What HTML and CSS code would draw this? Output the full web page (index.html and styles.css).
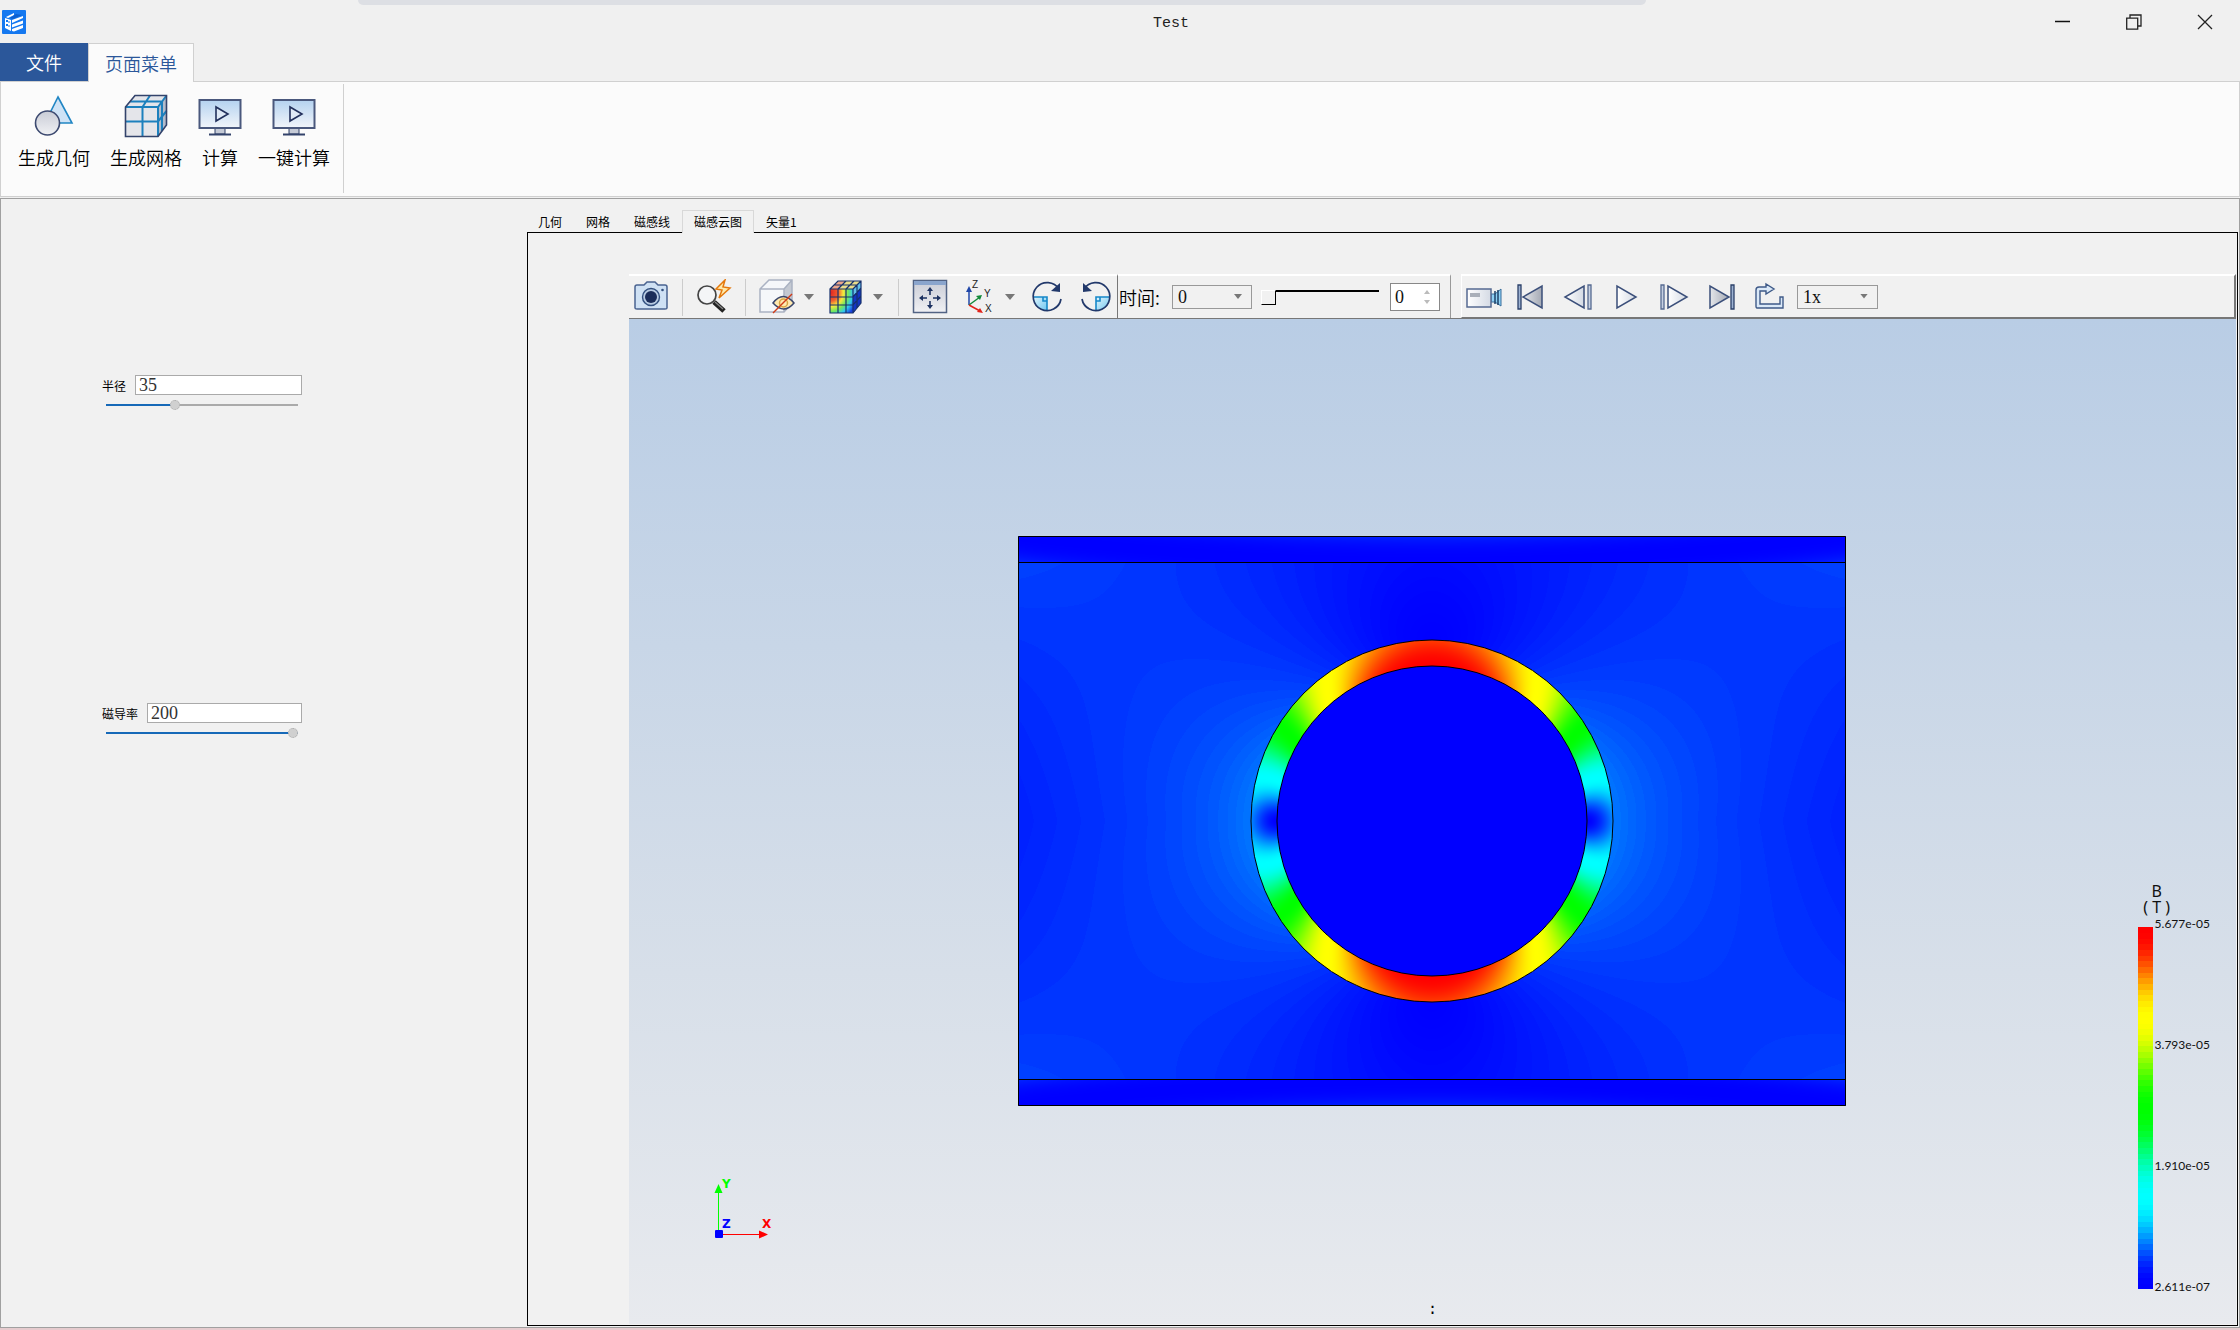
FILE: index.html
```html
<!DOCTYPE html>
<html lang="zh-CN">
<head>
<meta charset="utf-8">
<title>Test</title>
<link rel="stylesheet" href="styles.css">
</head>
<body>
<svg class="defs" aria-hidden="true">
  <defs>
    <linearGradient id="metal" x1="0" y1="0" x2="0" y2="1"><stop offset="0" stop-color="#c9ccd6"/><stop offset="1" stop-color="#f0f1f4"/></linearGradient>
    <linearGradient id="screen" x1="0" y1="0" x2="0" y2="1"><stop offset="0" stop-color="#b4d2f0"/><stop offset="1" stop-color="#f2f5fa"/></linearGradient>
    <linearGradient id="aqua" x1="0" y1="0" x2="1" y2="1"><stop offset="0" stop-color="#e2f5fd"/><stop offset="1" stop-color="#6cc6f0"/></linearGradient>
    <radialGradient id="rainbow" cx="0" cy=".15" r="1.2"><stop offset="0" stop-color="#e02020"/><stop offset=".3" stop-color="#f06030"/><stop offset=".48" stop-color="#f8e83c"/><stop offset=".66" stop-color="#70e860"/><stop offset=".82" stop-color="#30c8f0"/><stop offset="1" stop-color="#1840e0"/></radialGradient>
    <linearGradient id="shade" x1="0" y1="0" x2="1" y2="0"><stop offset="0" stop-color="#e4e6ea"/><stop offset="1" stop-color="#a4a9b4"/></linearGradient>
    <linearGradient id="pale" x1="0" y1="0" x2="1" y2="0"><stop offset="0" stop-color="#ffffff"/><stop offset="1" stop-color="#d4dae4"/></linearGradient>
  </defs>
</svg>

<header class="titlebar">
  <div class="backdrop"></div>
  <svg class="logo" viewBox="0 0 24 24"><rect width="24" height="24" rx="1" fill="#1478f0"/><path d="M4 7l8-4v2L6 8zM3 8l6 2v11l-6-3z" fill="#fff"/><path d="M5 10v2M5 14v2" stroke="#1478f0" stroke-width="2"/><path d="M7 11v2M7 15v2" stroke="#1478f0" stroke-width="1"/><path d="M10 10l11-4v2L10 13zM10 14.500l11-4v3l-11 4zM10 19l11-4v3l-9 3.500-2-.5z" fill="#fff"/><path d="M8 8l6-4 6 1-9 4z" fill="#0b5fd0"/></svg>
  <h1 class="title">Test</h1>
  <div class="window-buttons">
    <button aria-label="最小化"><svg viewBox="0 0 16 16"><path d="M0 7.500h15" stroke="#111" stroke-width="1.500"/></svg></button>
    <button aria-label="还原"><svg viewBox="0 0 16 16" fill="none" stroke="#222" stroke-width="1.300"><path d="M.7 4.200h11v11h-11zM4 4V1h11v11h-3"/></svg></button>
    <button aria-label="关闭"><svg viewBox="0 0 16 16"><path d="M1 1l14 14M15 1L1 15" stroke="#222" stroke-width="1.300"/></svg></button>
  </div>
</header>

<nav class="menu-tabs">
  <button class="file-tab">文件</button>
  <button class="page-tab">页面菜单</button>
</nav>

<section class="ribbon">
  <div class="ribbon-group">
    <button class="ribbon-item"><svg viewBox="0 0 44 44"><path d="M26 3l14 26H13z" fill="#cfe3f6" stroke="#2186c4" stroke-width="1.600"/><circle cx="15.500" cy="29" r="12" fill="url(#metal)" stroke="#3d4a70" stroke-width="1.600"/></svg><span>生成几何</span></button>
    <button class="ribbon-item"><svg viewBox="0 0 44 44"><path d="M1.500 13L11 1.500h31.500V31L34 42.500H1.500z" fill="#e4e5ea"/><path d="M34 13l8.500-11.500V31L34 42.500z" fill="#b4bccb"/><path d="M6 7.500h32V37M26 1.500L18.500 13v29.500M1.500 27.500H34L42.500 17M1.500 13H34v29.500M34 13l8.500-11.500" fill="none" stroke="#1c80bd" stroke-width="2"/><path d="M1.500 13L11 1.500h31.500V31L34 42.500H1.500z" fill="none" stroke="#33436b" stroke-width="1.600"/></svg><span>生成网格</span></button>
    <button class="ribbon-item"><svg viewBox="0 0 44 44"><path d="M17 34h10v6H17z" fill="#c5cad6" stroke="#33436b"/><path d="M11 40.500h22" stroke="#33436b" stroke-width="2"/><rect x="1.500" y="6" width="41" height="28" fill="url(#screen)" stroke="#4a587d" stroke-width="2"/><path d="M18 13v14l12-7z" fill="#dfe9f6" stroke="#22305c" stroke-width="1.600"/></svg><span>计算</span></button>
    <button class="ribbon-item"><svg viewBox="0 0 44 44"><path d="M17 34h10v6H17z" fill="#c5cad6" stroke="#33436b"/><path d="M11 40.500h22" stroke="#33436b" stroke-width="2"/><rect x="1.500" y="6" width="41" height="28" fill="url(#screen)" stroke="#4a587d" stroke-width="2"/><path d="M18 13v14l12-7z" fill="#dfe9f6" stroke="#22305c" stroke-width="1.600"/></svg><span>一键计算</span></button>
  </div>
</section>

<main class="workspace">
  <aside class="parameters">
    <div class="parameter">
      <div class="parameter-row"><label for="radius">半径</label><input class="text-box" id="radius" type="text" value="35"></div>
      <input class="slider slider-radius" type="range" min="0" max="100" value="35" aria-label="半径">
    </div>
    <div class="parameter">
      <div class="parameter-row"><label for="permeability">磁导率</label><input class="text-box" id="permeability" type="text" value="200"></div>
      <input class="slider slider-full" type="range" min="0" max="200" value="200" aria-label="磁导率">
    </div>
  </aside>

  <section class="results">
    <div class="view-tabs" role="tablist">
      <button role="tab">几何</button>
      <button role="tab">网格</button>
      <button role="tab">磁感线</button>
      <button role="tab" class="active" aria-selected="true">磁感云图</button>
      <button role="tab">矢量1</button>
    </div>
    <div class="view-panel">
      <div class="toolbars">
        <div class="toolbar toolbar-view">
          <button class="tool" aria-label="截图"><svg viewBox="0 0 36 36"><path d="M2 8q0-2 2-2h7l3-3h8l3 3h7q2 0 2 2v21q0 1-2 1H4q-2 0-2-1z" fill="#cfe1f4" stroke="#4a6390" stroke-width="1.500"/><circle cx="18" cy="18" r="8.500" fill="#b8cbe2" stroke="#33507f" stroke-width="1.400"/><circle cx="18" cy="18" r="6" fill="#1b2d59"/><circle cx="29.500" cy="11" r="1.300" fill="#33507f"/></svg></button>
          <i class="separator"></i>
          <button class="tool" aria-label="快速缩放"><svg viewBox="0 0 36 36"><path d="M18 23l10 9" stroke="#222" stroke-width="5"/><path d="M19 23l8 7" stroke="#888" stroke-width="1.200"/><circle cx="11" cy="16" r="9" fill="#f4f5f7" stroke="#444" stroke-width="1.700"/><path d="M29 1l-9 9 6 1-3 8 11-10-7-1z" fill="#ffe9a8" stroke="#e4780c" stroke-width="1.500"/></svg></button>
          <i class="separator"></i>
          <button class="tool" aria-label="隐藏"><svg viewBox="0 0 36 36"><path d="M1 10L10 1h23l-8 9v23H1z" fill="#f5f7fa"/><path d="M25 10l8-9v23l-8 9z" fill="#c4c9d2"/><path d="M1 10L10 1h23v23l-8 9H1zM1 10h24v23M25 10l8-9" fill="none" stroke="#aab2c2" stroke-width="1.500"/><path d="M14 24q10-13 21 0-10 12-21 0z" fill="#ffe9b0" stroke="#3a466b" stroke-width="1.500"/><circle cx="24.500" cy="24" r="4" fill="none" stroke="#d8a544" stroke-width="1.500"/><path d="M14 34L33 15" stroke="#d03c18" stroke-width="1.500"/></svg></button>
          <button class="drop" aria-label="隐藏选项"></button>
          <button class="tool" aria-label="云图"><svg viewBox="0 0 36 36"><path d="M2 10h23v24H2z" fill="url(#rainbow)"/><path d="M2 10l8-8h23l-8 8z" fill="#e9dc8a"/><path d="M2 10l8-8h7l-7 8z" fill="#eba58a"/><path d="M25 10l8-8v22l-8 10z" fill="#1435c4"/><path d="M25 10l8-8v7l-8 8z" fill="#62bfe8"/><path d="M2 10h23v24H2zL10 2h23v22l-8 10M25 10l8-8M10 10v24M18 10v24M2 18h23l8-9M2 26h23l8-9M10 10l8-8M18 10l8-8M6 6h23v23" fill="none" stroke="#16316c" stroke-width="1.200"/></svg></button>
          <button class="drop" aria-label="云图选项"></button>
          <i class="separator"></i>
          <button class="tool" aria-label="适应窗口"><svg viewBox="0 0 36 36"><rect x="1.500" y="1.500" width="33" height="32" fill="url(#metal)" stroke="#526384" stroke-width="1.500"/><path d="M2 2h32v4H2z" fill="#8aa5cd"/><path d="M18 11v5M18 22v5M9 19h6M21 19h6" stroke="#1d3261" stroke-width="1.600"/><path d="M18 8l-3 4h6zM18 30l-3-4h6zM7 19l4-3v6zM29 19l-4-3v6z" fill="#1d3261"/></svg></button>
          <button class="tool" aria-label="坐标轴"><svg class="axes-icon" viewBox="0 0 36 36"><path d="M9 26V9" stroke="#1f46a8" stroke-width="1.500"/><path d="M9 7l-3 6h6z" fill="#1f46a8"/><path d="M9 26l11-8" stroke="#138a3a" stroke-width="1.500"/><path d="M22 16l-6 1 4 4z" fill="#138a3a"/><path d="M9 26l11 6" stroke="#e2231a" stroke-width="1.500"/><path d="M23 34l-6-1 3-4z" fill="#e2231a"/><g fill="#222" font-family="Liberation Sans" font-size="10"><text x="12" y="9">Z</text><text x="24" y="18">Y</text><text x="25" y="33">X</text></g></svg></button>
          <button class="drop" aria-label="坐标轴选项"></button>
          <button class="tool" aria-label="顺时针旋转"><svg viewBox="0 0 36 36"><path d="M4 18h14v14Q5 31 4 18z" fill="url(#aqua)"/><path d="M4 18h14v14M14 18v4h4" fill="none" stroke="#1688c9" stroke-width="1.600"/><path d="M30 10A14 14 0 1 0 32 20" fill="none" stroke="#22396b" stroke-width="1.700"/><path d="M31 4v9l-9-1z" fill="#22396b"/></svg></button>
          <button class="tool" aria-label="逆时针旋转"><svg viewBox="0 0 36 36"><path d="M33 18H19v14q13-1 14-14z" fill="url(#aqua)"/><path d="M33 18H19v14M23 18v4h-4" fill="none" stroke="#1688c9" stroke-width="1.600"/><path d="M7 10A14 14 0 1 1 5 20" fill="none" stroke="#22396b" stroke-width="1.700"/><path d="M6 4v9l9-1z" fill="#22396b"/></svg></button>
        </div>
        <div class="toolbar toolbar-time">
          <label for="time">时间:</label>
          <span class="combo combo-time"><select id="time"><option>0</option></select></span>
          <input class="time-slider" type="range" min="0" max="10" value="0" aria-label="时间">
          <span class="spin"><input type="text" value="0" aria-label="帧"><svg viewBox="0 0 6 14"><path d="M0 4l3-4 3 4zM0 10l3 4 3-4z" fill="#bbb"/></svg></span>
        </div>
        <div class="toolbar toolbar-play">
          <button class="play-tool" aria-label="录制"><svg viewBox="0 0 36 36"><path d="M25 15h4l6-5v17l-6-4h-4z" fill="#8ed0f4" stroke="#3a6f9c"/><path d="M29 12v13M32 11v15" stroke="#1c4068" stroke-width="1.500"/><rect x="1" y="10" width="24" height="18" fill="url(#pale)" stroke="#566a91" stroke-width="1.500"/><path d="M4 14h10v4H4z" fill="#a9afb9"/></svg></button>
          <button class="play-tool" aria-label="首帧"><svg viewBox="0 0 36 36"><path d="M6 6h3v24H6z" fill="#9db2d1" stroke="#2b4069" stroke-width="1.300"/><path d="M30 7v22L11 18z" fill="url(#shade)" stroke="#3b4f7a" stroke-width="1.500"/></svg></button>
          <button class="play-tool" aria-label="上一帧"><svg viewBox="0 0 36 36"><path d="M28 6h3v24h-3z" fill="#c6d0e2" stroke="#566a91" stroke-width="1.300"/><path d="M24 7v22L5 18z" fill="url(#pale)" stroke="#3b4f7a" stroke-width="1.500"/></svg></button>
          <button class="play-tool" aria-label="播放"><svg viewBox="0 0 36 36"><path d="M9 7v22l19-11z" fill="url(#pale)" stroke="#3b4f7a" stroke-width="1.500"/></svg></button>
          <button class="play-tool" aria-label="下一帧"><svg viewBox="0 0 36 36"><path d="M5 6h3v24H5z" fill="#c6d0e2" stroke="#566a91" stroke-width="1.300"/><path d="M12 7v22l19-11z" fill="url(#pale)" stroke="#3b4f7a" stroke-width="1.500"/></svg></button>
          <button class="play-tool" aria-label="末帧"><svg viewBox="0 0 36 36"><path d="M27 6h3v24h-3z" fill="#9db2d1" stroke="#2b4069" stroke-width="1.300"/><path d="M6 7v22l19-11z" fill="url(#shade)" stroke="#3b4f7a" stroke-width="1.500"/></svg></button>
          <button class="play-tool" aria-label="循环"><svg viewBox="0 0 36 36"><path d="M14 8v-3l8 5-8 5v-3H8v13h20v-7h3v11H5q-1 0-1-2V11q0-3 3-3z" fill="#dbe9f8" stroke="#3f5a88" stroke-width="1.400"/></svg></button>
          <span class="combo combo-speed"><select aria-label="速度"><option>1x</option></select></span>
        </div>
      </div>

      <div class="viewport">
        <figure class="plot">
          <canvas id="field" width="828" height="570"></canvas>
          <svg class="outline" viewBox="0 0 828 570" fill="none" stroke="#000">
            <path d="M.5.500h827v569H.5zM.5 26.500h827M.5 543.500h827"/>
            <circle cx="414" cy="285" r="181"/>
            <circle cx="414" cy="285" r="155"/>
          </svg>
        </figure>
        <svg class="triad" viewBox="0 0 64 64">
          <path d="M10.500 52V8" stroke="#0f0"/><path d="M10.500 2l-4 9h8z" fill="#0f0"/>
          <path d="M12 52.500h42" stroke="#f00"/><path d="M60 52.500l-9-4v8z" fill="#f00"/>
          <rect x="7" y="48" width="8" height="8" rx="1" fill="#00f"/>
          <g class="triad-names"><text x="14" y="6" fill="#0f0">Y</text><text x="54" y="46" fill="#f00">X</text><text x="14" y="46" fill="#00f">Z</text></g>
        </svg>
        <div class="legend">
          <div class="legend-title">B<br>( T )</div>
          <div class="legend-scale">
            <canvas id="scale" width="15" height="362"></canvas>
            <ol class="legend-values"><li>5.677e-05</li><li>3.793e-05</li><li>1.910e-05</li><li>2.611e-07</li></ol>
          </div>
        </div>
        <div class="caption">:</div>
      </div>
    </div>
  </section>
</main>
<script src="field.js"></script>
</body>
</html>
```
FILE: styles.css
```css
* { box-sizing: border-box; }

body {
  margin: 0;
  height: 100vh;
  display: flex;
  flex-direction: column;
  background: #f0f0f0;
  color: #000;
  font-family: "Noto Sans CJK SC", sans-serif;
  font-size: 18px;
  font-weight: 350;
  border-bottom: 2px solid #e6cbce;
}

button {
  margin: 0;
  padding: 0;
  border: 0;
  background: none;
  color: inherit;
  font: inherit;
}

input, select { margin: 0; border-radius: 0; outline: 0; }
svg { display: block; flex: none; }
.defs { position: absolute; width: 0; height: 0; }

/* Title bar */
.titlebar {
  position: relative;
  flex: none;
  height: 43px;
  display: grid;
  grid-template-columns: 1fr auto 1fr;
  align-items: center;
  padding-left: 2px;
}
.backdrop {
  position: absolute;
  top: 0;
  left: 16%;
  width: 57.5%;
  height: 5px;
  border-radius: 0 0 8px 8px;
  background: #dddfe4;
}
.logo { width: 24px; height: 24px; }
.title {
  margin: 4px 0 0 100px;
  color: #222;
  font: 15px/20px "Liberation Mono", monospace;
}
.window-buttons { display: flex; justify-content: flex-end; }
.window-buttons button { width: 71px; height: 40px; display: grid; place-items: center; }
.window-buttons svg { width: 16px; height: 16px; }

/* Ribbon */
.menu-tabs { flex: none; display: flex; height: 38px; line-height: 38px; position: relative; }
.file-tab { width: 88px; background: #2b579a; color: #fff; }
.page-tab {
  width: 106px;
  height: 39px;
  background: #fbfbfb;
  color: #2b579a;
  border: 1px solid #d0d0d0;
  border-bottom: 0;
}
.ribbon {
  flex: none;
  height: 116px;
  margin-bottom: 1px;
  padding: 2px 0;
  background: #fbfbfb;
  border: 1px solid #d0d0d0;
}
.ribbon-group {
  display: flex;
  gap: 20px;
  width: max-content;
  height: 109px;
  padding: 10px 13px 0 17px;
  border-right: 1px solid #d0d0d0;
}
.ribbon-item { display: flex; flex-direction: column; align-items: center; gap: 5px; line-height: 28px; }
.ribbon-item svg { width: 44px; height: 44px; margin: 0 -4px; }

/* Workspace */
.workspace {
  flex: 1;
  min-height: 0;
  display: grid;
  grid-template-columns: 526px minmax(0, 1fr);
  border: 1px solid #a0a0a0;
  background: #f1f1f1;
}

.parameters { padding: 176px 0 0 101px; }
.parameter { width: 200px; height: 328px; }
.parameter-row { display: flex; gap: 9px; align-items: center; height: 20px; font-size: 12px; font-weight: 400; }
.text-box {
  flex: 1;
  min-width: 0;
  height: 20px;
  padding: 1px 3px 0;
  border: 1px solid #aaa;
  background: #fff;
  color: #333;
  font: 18px/18px "Liberation Serif", serif;
}
.slider {
  appearance: none;
  display: block;
  width: 192px;
  height: 12px;
  margin: 4px 0 0 4px;
  background: linear-gradient(#aaa, #aaa) center / 100% 2px no-repeat;
}
.slider::-webkit-slider-thumb {
  appearance: none;
  width: 10px;
  height: 10px;
  border-radius: 50%;
  border: 1px dotted #aaa;
  background: #d0d0d0;
}
.slider-radius { background: linear-gradient(to right, #1669b8 35%, #aaa 35%) center / 100% 2px no-repeat; }
.slider-full { background: linear-gradient(#1669b8, #1669b8) center / 100% 2px no-repeat; }

.results { display: flex; flex-direction: column; min-width: 0; padding: 11px 1px 1px 0; }
.view-tabs { display: flex; height: 22px; margin-left: -1px; position: relative; font-size: 12px; font-weight: 400; line-height: 22px; }
.view-tabs button { padding: 1px 12px 0; }
.view-tabs .active {
  height: 23px;
  padding: 0 11px;
  border: 1px solid #d8d8d8;
  border-bottom: 0;
  background: #f1f1f1;
}
.view-panel {
  flex: 1;
  min-height: 0;
  display: flex;
  flex-direction: column;
  padding: 41px 1px 1px 101px;
  border: 1px solid #000;
}

/* Toolbars */
.toolbars { flex: none; display: flex; height: 45px; border-bottom: 1px solid #777; }
.toolbar { display: flex; align-items: center; border-top: 2px solid #fff; }
.toolbar-view { border-right: 1px solid #777; }
.tool { width: 44px; height: 36px; display: grid; place-items: center; }
.tool + .tool { margin-left: 4px; }
.tool svg { width: 36px; height: 36px; }
.axes-icon { overflow: visible; }
.separator { width: 1px; height: 37px; margin: 0 9px; background: #ccc; }
.drop { width: 20px; height: 36px; margin-right: 5px; display: grid; place-items: center; }
.drop + .separator { margin-left: 5px; }
.drop::before, .combo::after {
  content: "";
  width: 10px;
  height: 6px;
  background: #777;
  clip-path: polygon(0 0, 100% 0, 50% 100%);
}
.toolbar-time { width: 333px; padding-left: 1px; border-right: 1px solid #999; }
.toolbar-time label { flex: none; width: 53px; }
.combo {
  position: relative;
  flex: none;
  height: 24px;
  border: 1px solid #999;
}
.combo::after { position: absolute; right: 9px; top: 8px; width: 8px; height: 5px; pointer-events: none; }
.combo select {
  appearance: none;
  display: block;
  width: 100%;
  height: 22px;
  padding: 0 5px;
  border: 0;
  background: none;
  color: #111;
  font: 18px/22px "Liberation Serif", serif;
}
.combo-time { width: 80px; }
.combo-speed { width: 81px; margin-left: 3px; }
.time-slider {
  appearance: none;
  flex: none;
  width: 118px;
  height: 15px;
  margin: 0 11px 0 9px;
  background: linear-gradient(#000, #000) right 0 top 0 / 103px 2px no-repeat;
}
.time-slider::-webkit-slider-thumb {
  appearance: none;
  width: 15px;
  height: 15px;
  background: #f1f1f1;
  border: 1px solid #fff;
  border-right: 1px solid #000;
  border-bottom: 1px solid #000;
}
.spin { flex: none; display: flex; align-items: center; width: 50px; height: 28px; padding-right: 9px; border: 1px solid #888; background: #fff; }
.spin input { flex: 1; min-width: 0; height: 26px; padding: 0 4px; border: 0; background: none; color: #111; font: 18px/26px "Liberation Serif", serif; }
.spin svg { width: 6px; height: 14px; }
.toolbar-play {
  flex: 1;
  margin-left: 10px;
  border-left: 1px solid #fff;
  border-right: 2px solid #777;
  border-bottom: 1px solid #777;
}
.play-tool { width: 48px; height: 36px; display: grid; place-items: center; margin: 0; }
.play-tool:first-child { width: 44px; }
.play-tool svg { width: 36px; height: 36px; }

/* Result view */
.viewport {
  position: relative;
  flex: 1;
  min-height: 0;
  display: grid;
  place-items: center;
  background: linear-gradient(#b9cde5, #d7dfe9 65%, #e8eaee);
}
.plot { position: relative; margin: 0 1px 2px 0; }
.plot canvas { display: block; }
.outline { position: absolute; inset: 0; width: 100%; height: 100%; }
.triad { position: absolute; left: 79px; bottom: 78px; width: 64px; height: 64px; overflow: visible; }
.triad-names { font: bold 12px "DejaVu Sans", sans-serif; }
.legend {
  position: absolute;
  right: 26px;
  bottom: 29px;
  font: 12px/16px Lato, sans-serif;
  color: #111;
}
.legend-title { width: 36px; margin: 0 0 4px 1px; text-align: center; font: 16px/16px "Noto Sans", sans-serif; }
.legend-scale { display: flex; align-items: flex-start; gap: 2px; }
.legend-scale canvas { display: block; margin-top: 8px; }
.legend-values {
  display: flex;
  flex-direction: column;
  justify-content: space-between;
  height: 379px;
  margin: -3px 0 0;
  padding: 0;
  list-style: none;
}
.caption { position: absolute; left: 50%; bottom: 5px; font: 15px/20px "DejaVu Sans Mono", monospace; transform: translateX(-50%); }
```
FILE: field.js
```js
// Eased blue-cyan-green-yellow-red map for a value from 0 to 1.
const stops = [[0, 0, 255], [0, 255, 255], [0, 255, 0], [255, 255, 0], [255, 0, 0]];

function colour(value) {
  const t = Math.min(Math.max(value, 0), 0.9999) * 4;
  const i = Math.floor(t);
  const f = (1 - Math.cos(Math.PI * (t - i))) / 2;
  return stops[i].map((c, k) => c + (stops[i + 1][k] - c) * f);
}

const INNER = 155, OUTER = 181, STRIP = 26;

// Relative flux density at a point measured from the centre of the shell.
function density(x, y, w, h) {
  const r = Math.hypot(x, y);
  const cx = Math.abs(x) / w, ay = Math.abs(y);
  if (r < INNER) return 0;
  if (r < OUTER) {
    const s = (r - INNER) / (OUTER - INNER);
    return Math.hypot(ay / r * (1 - 0.09 * s), 0.13 * s);
  }
  if (ay > h - STRIP) {
    const u = (h - ay) / STRIP;
    return 0.06 * Math.pow(Math.abs((1 - u) * (1 - cx * cx) - u * cx * cx), 1.3);
  }
  const q = OUTER * OUTER / (r * r);
  const cos = x / r, sin = y / r;
  const v = ay / (h - STRIP);
  const uniform = Math.hypot((1 + q) * cos, (1 - q) * sin);
  const corner = 0.02 * Math.pow(cx * v, 1.2);
  const side = 0.014 * Math.pow(cx, 4) * (1 - v * v);
  return Math.round((0.06 * uniform + corner - side) * 240) / 240;
}

function paint(id, value) {
  const canvas = document.getElementById(id);
  const context = canvas.getContext("2d");
  const image = context.createImageData(canvas.width, canvas.height);
  for (let y = 0, p = 0; y < canvas.height; y++) {
    for (let x = 0; x < canvas.width; x++, p += 4) {
      image.data.set([...colour(value(x, y, canvas.width, canvas.height)), 255], p);
    }
  }
  context.putImageData(image, 0, 0);
}

paint("field", (x, y, w, h) => density(x + 0.5 - w / 2, y + 0.5 - h / 2, w / 2, h / 2));
paint("scale", (x, y, w, h) => 1 - Math.floor(y / h * 64) / 63);
```
